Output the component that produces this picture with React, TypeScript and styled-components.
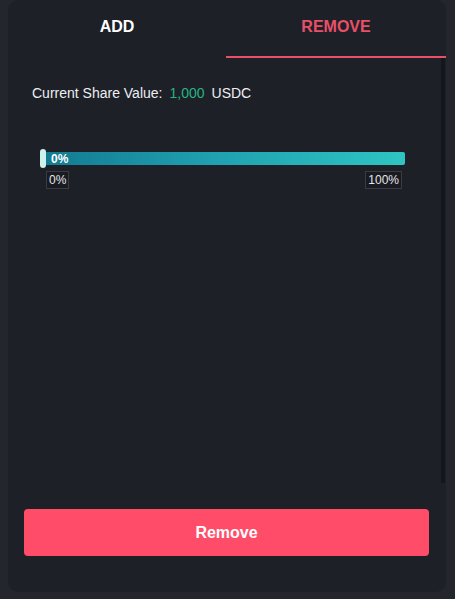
import React from "react";
import styled, { createGlobalStyle } from "styled-components";

const Global = createGlobalStyle`
  html, body { margin: 0; padding: 0; background: #23262d; }
  body { font-family: "Liberation Sans", Arial, sans-serif; }
`;

const Card = styled.div`
  margin: 0 9px 0 8px;
  height: 592px;
  background: #1d2027;
  border-radius: 10px;
  display: flex;
  flex-direction: column;
  overflow: hidden;
`;

const Tabs = styled.div`
  display: grid;
  grid-template-columns: 218px 1fr;
  height: 58px;
`;

const Tab = styled.div<{ $active?: boolean }>`
  display: flex;
  align-items: center;
  justify-content: center;
  padding-bottom: 3px;
  box-sizing: border-box;
  font-weight: 700;
  font-size: 16px;
  color: ${(p) => (p.$active ? "#e94f68" : "#ffffff")};
  border-bottom: 2px solid ${(p) => (p.$active ? "#e94f68" : "transparent")};
`;

const Body = styled.div`
  display: flex;
  height: 425px;
`;

const Content = styled.div`
  flex: 1;
  padding: 27px 0 0 24px;
`;

const ScrollBar = styled.div`
  width: 4px;
  margin-right: 1px;
  background: #14161b;
`;

const ShareRow = styled.div`
  font-size: 14px;
  line-height: 16px;
  color: #eceff2;
  display: flex;
  gap: 7px;
`;

const Green = styled.span`
  color: #25b584;
`;

const Slider = styled.div`
  margin: 51px 0 0 9px;
  width: 364px;
`;

const Track = styled.div`
  position: relative;
  height: 13px;
  margin-top: 3px;
  border-radius: 2px;
  background: linear-gradient(90deg, #137a90 0%, #1f9fae 45%, #2ec5c3 100%);
  display: flex;
  align-items: center;
`;

const Thumb = styled.div`
  position: absolute;
  left: -1px;
  top: -3px;
  width: 6px;
  height: 19px;
  border-radius: 3px;
  background: #cdf1ec;
`;

const TrackLabel = styled.span`
  margin-left: 10px;
  font-size: 12px;
  font-weight: 700;
  color: #ffffff;
`;

const Marks = styled.div`
  display: flex;
  justify-content: space-between;
  margin: 6px 3px 0 5px;
`;

const Mark = styled.span`
  border: 1px solid #393c44;
  background: #191b21;
  color: #e4e6ea;
  font-size: 12px;
  line-height: 16px;
  padding: 0 2px;
`;

const Footer = styled.div`
  padding: 26px 17px 0 16px;
`;

const Button = styled.button`
  width: 100%;
  height: 47px;
  border: none;
  border-radius: 4px;
  background: #ff4d69;
  color: #fff;
  font-family: "Liberation Sans", Arial, sans-serif;
  font-weight: 700;
  font-size: 16px;
`;

export default function App() {
  return (
    <>
      <Global />
      <Card>
        <Tabs>
          <Tab>ADD</Tab>
          <Tab $active>REMOVE</Tab>
        </Tabs>
        <Body>
          <Content>
            <ShareRow>
              <span>Current Share Value:</span>
              <Green>1,000</Green>
              <span>USDC</span>
            </ShareRow>
            <Slider>
              <Track>
                <Thumb />
                <TrackLabel>0%</TrackLabel>
              </Track>
              <Marks>
                <Mark>0%</Mark>
                <Mark>100%</Mark>
              </Marks>
            </Slider>
          </Content>
          <ScrollBar />
        </Body>
        <Footer>
          <Button>Remove</Button>
        </Footer>
      </Card>
    </>
  );
}
